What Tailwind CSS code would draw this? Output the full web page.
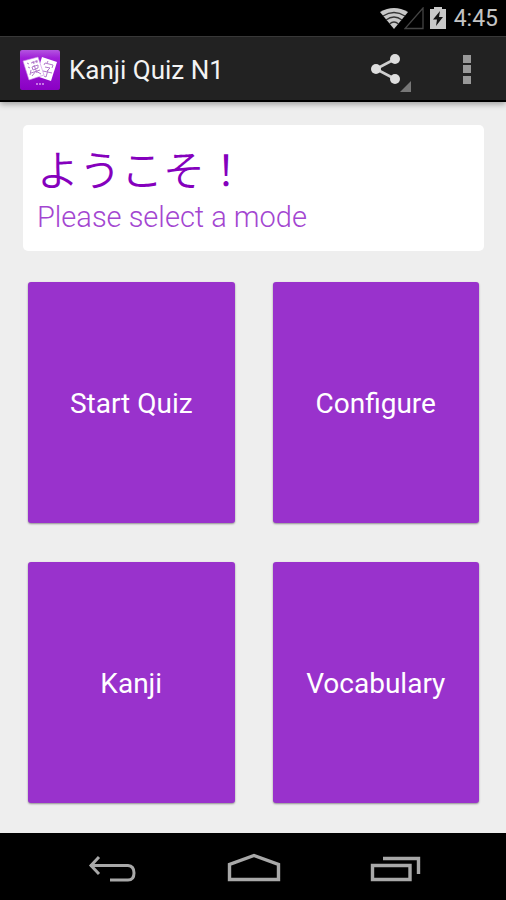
<!DOCTYPE html>
<html lang="en">
<head>
<meta charset="utf-8">
<meta name="viewport" content="width=device-width, initial-scale=1">
<title>Kanji Quiz N1</title>
<script src="https://cdn.jsdelivr.net/npm/@tailwindcss/browser@4"></script>
</head>
<body class="flex min-h-screen flex-col bg-[#eeeeee] font-[Roboto,'Noto_Sans_CJK_JP',sans-serif]">
  <!-- Status bar -->
  <div class="flex h-9 items-center justify-end bg-black pr-2 pt-0.5 text-[#c4c4c4]">
    <svg class="h-6 w-7" viewBox="0 0 28 24" aria-hidden="true">
      <path d="M0 5Q14-3 28 5L14 22Z" fill="#c8c8c8"/>
      <path d="M3 9Q14 2 25 9M6 13Q14 7 22 13M9.500 17Q14 13 18.500 17" fill="none" stroke="#333" stroke-width="1.300"/>
    </svg>
    <svg class="-ml-1 h-6 w-5" viewBox="0 0 20 24" aria-hidden="true"><path d="M19 1V21.500H1Z" fill="none" stroke="#444" stroke-width="1.300"/></svg>
    <svg class="ml-1.5 mr-2 h-6 w-4" viewBox="0 0 16 24" aria-hidden="true">
      <path d="M0 2H4V0H12V2H16V22H0Z" fill="#c8c8c8"/>
      <path d="M10 4L3 12.500H7L6 19L13 10H9Z" fill="#111"/>
    </svg>
    <span class="text-[23px] leading-8">4:45</span>
  </div>

  <!-- Action bar -->
  <header class="relative z-10 flex h-[66px] items-center border-t border-b-2 border-t-[#383838] border-b-black bg-[#222222] pl-5 pt-0.5 shadow-[0_2px_6px_rgba(0,0,0,0.35)]">
    <svg class="h-10 w-10 shrink-0" viewBox="0 0 40 40" aria-hidden="true">
      <defs><linearGradient id="g" x1="0" y1="0" x2="0" y2="1"><stop offset="0" stop-color="#b455e0"/><stop offset=".2" stop-color="#a01fd8"/><stop offset="1" stop-color="#8a00c4"/></linearGradient></defs>
      <rect width="40" height="40" rx="2" fill="url(#g)"/>
      <path d="M22 7L37 12L31 31L16 26Z" fill="#fff"/>
      <path d="M3 11L18 7L24 25L9 30Z" fill="#fff" stroke="#c98ae6" stroke-width=".6"/>
      <g fill="none" stroke="#b27acb" stroke-width="1">
        <path d="M7 13L9 14M8 17L10 18M10 25L11 20M11 13L18 11M13 11L14 14M16 10L17 13M12 17L18 15V18L13 20ZM14 15L17 23M11 23L20 20M16 21L12 26M16 21L21 24"/>
        <path d="M28 11L27 13M24 15L25 13L33 15L32 18M25 17L30 18L27 21M23 21L32 23M28 20L26 27L24 26"/>
      </g>
      <path d="M16 34H18M19 34H21M22 34H24" stroke="#d89cf0" stroke-width="1.500"/>
    </svg>
    <h1 class="ml-[9px] flex-1 text-[26px] leading-8 text-[#f3f3f3]">Kanji Quiz N1</h1>
    <button type="button" aria-label="Share" class="h-12 w-12">
      <svg class="h-12 w-12" viewBox="0 0 48 48">
        <path d="M32 13L13 23L32 33" fill="none" stroke="#cfcfcf" stroke-width="2.600"/>
        <g fill="#dedede"><circle cx="32" cy="13" r="5"/><circle cx="13" cy="23" r="5"/><circle cx="32" cy="33" r="5"/></g>
        <path d="M48 35V46H37Z" fill="#777"/>
      </svg>
    </button>
    <button type="button" aria-label="More options" class="ml-8 mr-[15px] h-12 w-12">
      <svg class="h-12 w-12" viewBox="0 0 48 48" fill="#999"><path d="M20 9H28V17H20ZM20 19H28V27H20ZM20 30H28V38H20Z"/></svg>
    </button>
  </header>

  <main class="flex flex-1 flex-col pb-[30px] pt-[23px]">
    <section class="ml-[23px] mr-[22px] rounded-[5px] bg-white px-[14px] py-4">
      <h2 lang="ja" class="mb-1 font-['Noto_Sans_CJK_JP',sans-serif] text-[42px] font-[350] leading-[54px] text-[#8500bd]">ようこそ！</h2>
      <p class="text-[29px] font-light leading-9 text-[#a346d1]">Please select a mode</p>
    </section>
    <nav aria-label="Modes" class="ml-7 mr-[27px] mt-[31px] grid flex-1 grid-cols-2 grid-rows-2 gap-x-[38px] gap-y-[39px]">
      <button type="button" class="rounded-[3px] bg-[#9932cc] pt-0.5 text-[28px] text-white shadow-[0_1px_2px_rgba(0,0,0,0.4)]">Start Quiz</button>
      <button type="button" class="rounded-[3px] bg-[#9932cc] pt-0.5 text-[28px] text-white shadow-[0_1px_2px_rgba(0,0,0,0.4)]">Configure</button>
      <button type="button" class="rounded-[3px] bg-[#9932cc] pt-0.5 text-[28px] text-white shadow-[0_1px_2px_rgba(0,0,0,0.4)]">Kanji</button>
      <button type="button" class="rounded-[3px] bg-[#9932cc] pt-0.5 text-[28px] text-white shadow-[0_1px_2px_rgba(0,0,0,0.4)]">Vocabulary</button>
    </nav>
  </main>

  <!-- System navigation -->
  <footer class="flex h-[67px] items-center justify-center gap-[86px] bg-black pl-0.5">
    <button type="button" aria-label="Back" class="h-9 w-14">
      <svg class="h-9 w-14" viewBox="0 0 56 36" fill="none" stroke="#a8a8a8" stroke-width="3"><path d="M6 16.500H44Q50 17 50 24T44 31H26M15 8L7 16.500L15 25"/></svg>
    </button>
    <button type="button" aria-label="Home" class="h-9 w-14">
      <svg class="h-9 w-14" viewBox="0 0 56 36" fill="none" stroke="#a8a8a8" stroke-width="3.400"><path d="M3.500 30.500V15.500L28 6.500L52.500 15.500V30.500Z"/></svg>
    </button>
    <button type="button" aria-label="Recent apps" class="h-9 w-14">
      <svg class="h-9 w-14" viewBox="0 0 56 36" fill="none" stroke="#a8a8a8" stroke-width="3.400"><path d="M4.500 16.500H42V30.500H4.500ZM15 9.500H50.500V25"/></svg>
    </button>
  </footer>
</body>
</html>
